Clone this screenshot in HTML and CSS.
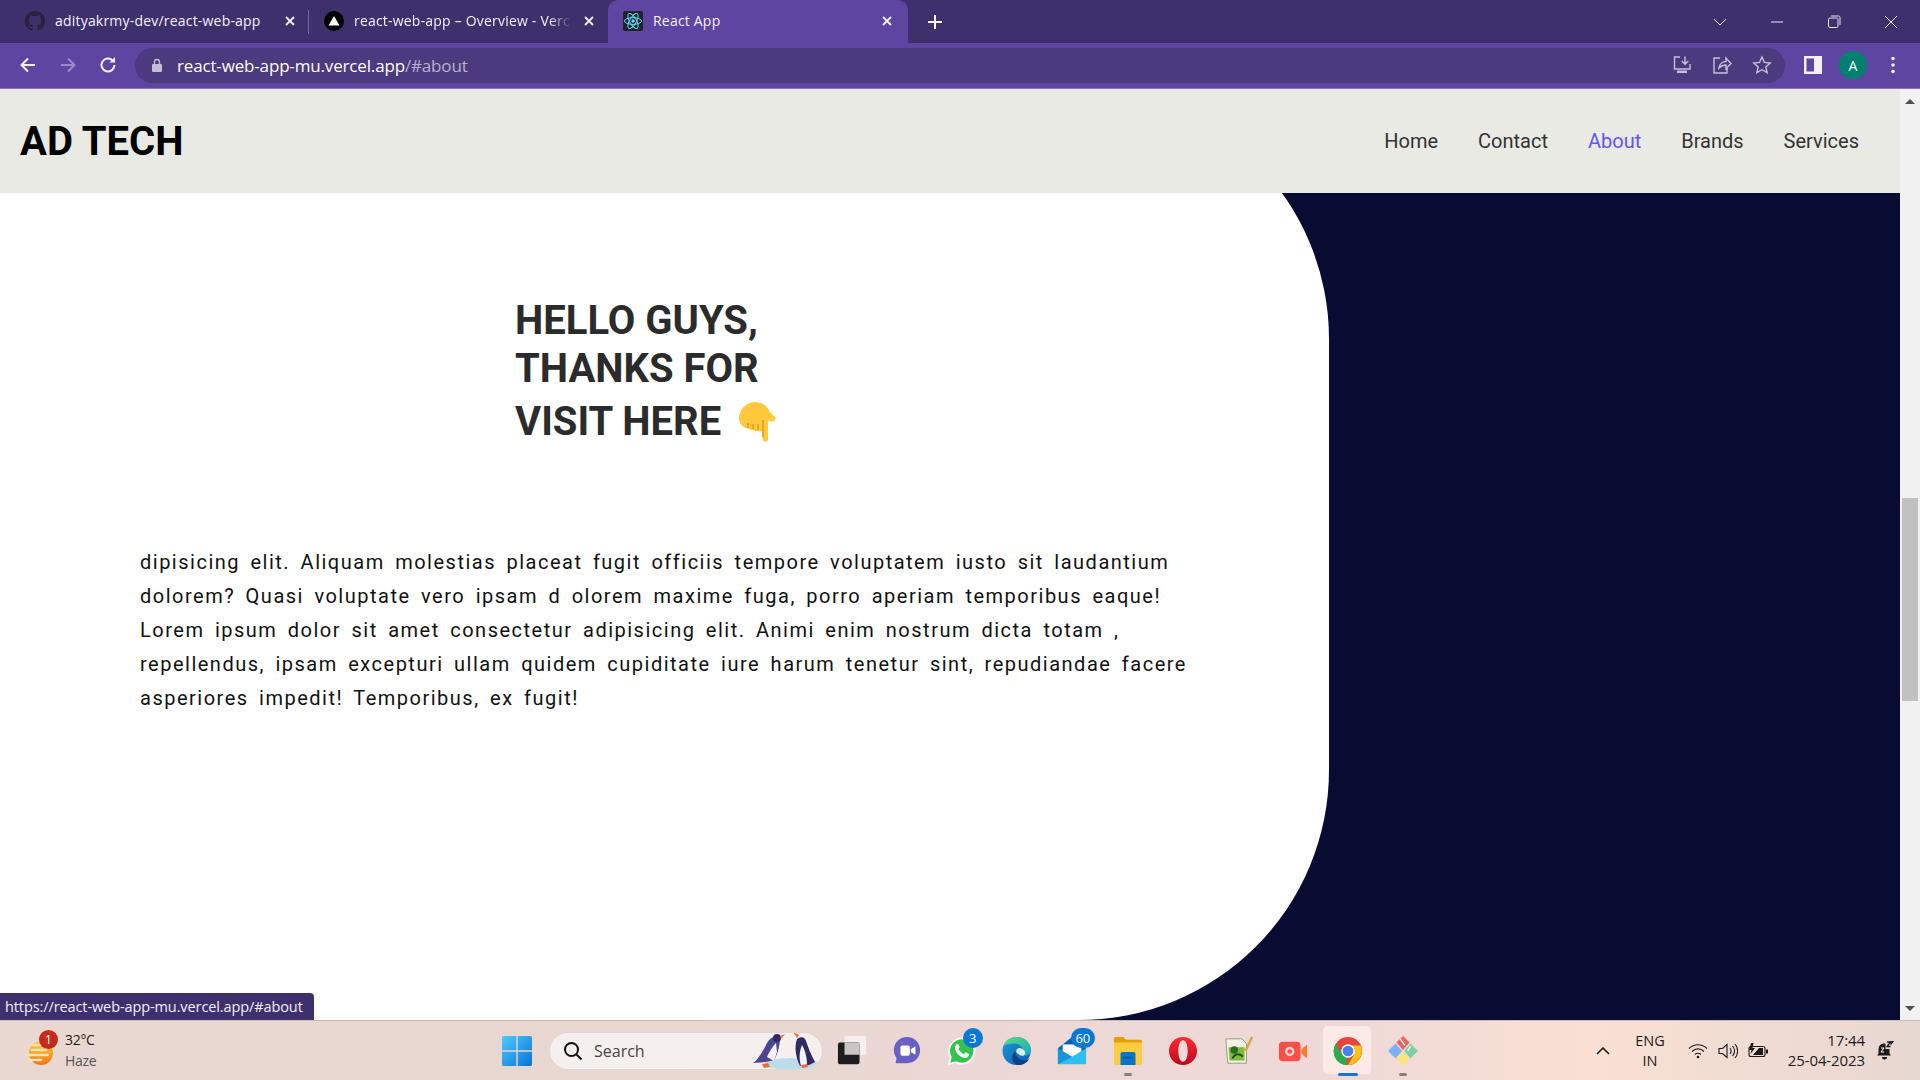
FILE: index.html
```html
<!DOCTYPE html>
<html lang="en">
<head>
<meta charset="utf-8">
<title>React App</title>
<link rel="stylesheet" href="styles.css">
</head>
<body>
<header class="browser">
  <div class="tabstrip">
    <div class="tab tab-one">
      <svg class="favicon" viewBox="0 0 16 16"><path fill="#24243a" d="M8 0C3.58 0 0 3.58 0 8c0 3.54 2.29 6.53 5.47 7.59.4.07.55-.17.55-.38 0-.19-.01-.82-.01-1.49-2.01.37-2.53-.49-2.69-.94-.09-.23-.48-.94-.82-1.13-.28-.15-.68-.52-.01-.53.63-.01 1.08.58 1.23.82.72 1.21 1.87.87 2.33.66.07-.52.28-.87.51-1.07-1.78-.2-3.64-.89-3.64-3.95 0-.87.31-1.59.82-2.15-.08-.2-.36-1.02.08-2.12 0 0 .67-.21 2.2.82.64-.18 1.32-.27 2-.27.68 0 1.36.09 2 .27 1.53-1.04 2.2-.82 2.2-.82.44 1.1.16 1.92.08 2.12.51.56.82 1.27.82 2.15 0 3.07-1.87 3.75-3.65 3.95.29.25.54.73.54 1.48 0 1.07-.01 1.93-.01 2.2 0 .21.15.46.55.38A8.013 8.013 0 0016 8c0-4.42-3.58-8-8-8z"/></svg>
      <span class="tab-title">adityakrmy-dev/react-web-app</span>
      <svg class="tab-close" viewBox="0 0 10 10"><path d="M1 1l8 8M9 1l-8 8"/></svg>
    </div>
    <div class="tab tab-two">
      <svg class="favicon" viewBox="0 0 20 20"><circle cx="10" cy="10" r="10" fill="#000"/><path d="M10 5l5.5 9.5h-11z" fill="#fff"/></svg>
      <span class="tab-title tab-fade">react-web-app – Overview - Verc</span>
      <svg class="tab-close" viewBox="0 0 10 10"><path d="M1 1l8 8M9 1l-8 8"/></svg>
    </div>
    <div class="tab tab-active">
      <svg class="favicon" viewBox="0 0 20 20"><rect width="20" height="20" rx="2" fill="#20232a"/><g fill="none" stroke="#61dafb" stroke-width="1"><ellipse cx="10" cy="10" rx="8.5" ry="3.4"/><ellipse cx="10" cy="10" rx="8.5" ry="3.4" transform="rotate(60 10 10)"/><ellipse cx="10" cy="10" rx="8.5" ry="3.4" transform="rotate(120 10 10)"/></g><circle cx="10" cy="10" r="1.7" fill="#61dafb"/></svg>
      <span class="tab-title">React App</span>
      <svg class="tab-close" viewBox="0 0 10 10"><path d="M1 1l8 8M9 1l-8 8"/></svg>
    </div>
    <svg class="new-tab" viewBox="0 0 14 14"><path d="M7 0v14M0 7h14"/></svg>
    <div class="window-controls">
      <svg class="win-icon" viewBox="0 0 14 14"><path d="M1 4l6 6 6-6"/></svg>
      <svg class="win-icon" viewBox="0 0 14 14"><path d="M1 7h12"/></svg>
      <svg class="win-icon" viewBox="0 0 14 14"><rect x="1.5" y="3" width="9.5" height="9.5" rx="1.5"/><path d="M4 1h7.5a1.5 1.5 0 0 1 1.5 1.5V10"/></svg>
      <svg class="win-icon" viewBox="0 0 14 14"><path d="M1 1l12 12M13 1L1 13"/></svg>
    </div>
  </div>
  <div class="toolbar">
    <svg class="nav-btn nav-back" viewBox="0 0 18 18"><path d="M16 9H3M9 2.5L2.5 9 9 15.500"/></svg>
    <svg class="nav-btn nav-forward" viewBox="0 0 18 18"><path d="M2 9h13M9 2.500L15.500 9 9 15.500"/></svg>
    <svg class="nav-btn nav-reload" viewBox="0 0 18 18"><path d="M15.500 9a6.500 6.500 0 1 1-1.900-4.600"/><path class="solid" d="M16 1v5.500h-5.500z"/></svg>
    <div class="omnibox">
      <svg class="lock" viewBox="0 0 12 14"><path d="M2 6h8a1 1 0 0 1 1 1v6a1 1 0 0 1-1 1H2a1 1 0 0 1-1-1V7a1 1 0 0 1 1-1z" fill="#c3bdd6"/><path d="M3.500 6V4a2.500 2.500 0 0 1 5 0v2" fill="none" stroke="#c3bdd6" stroke-width="1.300"/></svg>
      <span class="url">react-web-app-mu.vercel.app<span class="url-dim">/#about</span></span>
      <div class="omni-actions">
        <svg class="omni-icon" viewBox="0 0 20 20"><path d="M8 2H2.500v12H18V9M13 1.500V9M9.800 6l3.200 3.200L16.200 6"/><path class="solid" d="M5 15.500h10v2.500H5z"/></svg>
        <svg class="omni-icon" viewBox="0 0 20 20"><path d="M8 3H2v15h13v-5M7 13c.5-4 3.500-6.500 7-6.500V3l5 5.500-5 5V10c-3 0-5 1-7 3z"/></svg>
        <svg class="omni-icon" viewBox="0 0 20 20"><path d="M10 2l2.400 5.400 5.800.6-4.400 3.900 1.300 5.800L10 14.700l-5.100 3 1.300-5.800L1.800 8l5.800-.6z"/></svg>
      </div>
    </div>
    <div class="profile-actions">
      <svg class="panel-icon" viewBox="0 0 18 18"><path fill="#f2f0f7" d="M0 0h18v18H0z"/><path fill="#5d45a1" d="M2.500 2.500h7.500v13H2.500z"/></svg>
      <span class="avatar">A</span>
      <svg class="dots" viewBox="0 0 4 18"><circle cx="2" cy="2.500" r="1.800"/><circle cx="2" cy="9" r="1.800"/><circle cx="2" cy="15.500" r="1.800"/></svg>
    </div>
  </div>
</header>

<main class="viewport">
  <nav class="site-nav">
    <h1 class="brand">AD TECH</h1>
    <ul class="nav-links">
      <li>Home</li>
      <li>Contact</li>
      <li class="current">About</li>
      <li>Brands</li>
      <li>Services</li>
    </ul>
  </nav>
  <section class="about-page">
    <div class="about-card">
      <h2 class="about-title">HELLO GUYS,<br>THANKS FOR<span class="title-last">VISIT HERE <svg class="hand" viewBox="0 0 38 41"><path fill="#ffc83d" d="M1 17C1 8 9 1 17 1c7 0 12 4 15 10l5 5c1.500 2-.5 5-3 4.500l-4-1V38c0 3.500-5 3.500-5.500 0L24 30c-2 1-3.500.5-4.500-.5-1.500 1-3.500 1-4.500-.5-2 .5-3.500-.5-4.500-1.500C5 27 1 23 1 17z"/><path fill="none" stroke="#e39a12" stroke-width="1.500" d="M25 19v17M10 22v5M15 23v5M20 23v6"/></svg></span></h2>
      <p class="about-text">dipisicing elit. Aliquam molestias placeat fugit officiis tempore voluptatem iusto sit laudantium dolorem? Quasi voluptate vero ipsam d olorem maxime fuga, porro aperiam temporibus eaque! Lorem ipsum dolor sit amet consectetur adipisicing elit. Animi enim nostrum dicta totam , repellendus, ipsam excepturi ullam quidem cupiditate iure harum tenetur sint, repudiandae facere asperiores impedit! Temporibus, ex fugit!</p>
    </div>
  </section>
  <aside class="scrollbar">
    <span class="arrow arrow-up"></span>
    <span class="thumb"></span>
    <span class="arrow arrow-down"></span>
  </aside>
  <div class="status-bubble">https://react-web-app-mu.vercel.app/#about</div>
</main>

<footer class="taskbar">
  <div class="weather">
    <svg class="weather-icon" viewBox="0 0 30 30"><defs><linearGradient id="sun" x1="0" y1="0" x2="0" y2="1"><stop offset="0" stop-color="#ffd23f"/><stop offset="1" stop-color="#f0740f"/></linearGradient></defs><circle cx="16" cy="15" r="12" fill="url(#sun)"/><path d="M8 7h12M7 12h14M1 17h22M4 22h12" stroke="#f4e3b5" stroke-width="2.500" stroke-linecap="round"/></svg>
    <span class="weather-badge">1</span>
    <div class="weather-text"><span>32°C</span><span class="haze">Haze</span></div>
  </div>
  <div class="task-center">
    <svg class="start" viewBox="0 0 30 30"><defs><linearGradient id="win" x1="0" y1="0" x2="1" y2="1"><stop offset="0" stop-color="#4fc9fb"/><stop offset="1" stop-color="#0a74d4"/></linearGradient></defs><path fill="url(#win)" d="M0 1.500A1.500 1.500 0 0 1 1.500 0H14.300v14.300H0zM15.700 0H28.500A1.500 1.500 0 0 1 30 1.500V14.300H15.700zM0 15.700H14.300V30H1.500A1.500 1.500 0 0 1 0 28.500zM15.700 15.700H30V28.500A1.500 1.500 0 0 1 28.500 30H15.700z"/></svg>
    <div class="search">
      <svg class="search-icon" viewBox="0 0 20 20"><circle cx="8.500" cy="8.500" r="6.500"/><path d="M13.500 13.500L18.500 18.500"/></svg>
      <span class="search-label">Search</span>
      <svg class="penguins" viewBox="0 0 72 38"><ellipse cx="45" cy="33" rx="27" ry="6" fill="#bcdcec"/><path d="M6 32c5-3 10-12 14-20 3-5 8-8 12-7l1 5c-1 6-2 13-6 19l-8 2z" fill="#4c4590"/><path d="M20 26c2-5 6-11 9-14l1 9-3 9z" fill="#f4f1f5"/><circle cx="30" cy="7" r="4" fill="#2e2a63"/><path d="M33 5l5-2-4 5z" fill="#ef6c2c"/><path d="M50 8c4-3 8-2 9 2 2 6 5 14 9 21l-6 3-9 1c-4-8-6-19-3-27z" fill="#2e2a63"/><path d="M55 14c3 5 5 12 5 20l-6 1c-2-7-2-14 1-21z" fill="#f4f1f5"/><path d="M50 7l-4-6 6 3z" fill="#ef6c2c"/><path d="M15 33l6-1 2 4-6 1zM54 34l6-1 1 3-6 1z" fill="#ef6c2c"/></svg>
    </div>
    <div class="task-apps">
      <div class="app">
        <svg class="app-icon" viewBox="0 0 32 32"><rect x="8" y="0" width="23" height="20" rx="2" fill="#f6f3f2" fill-opacity=".9"/><rect x="1" y="7" width="23" height="23" rx="2" fill="#1d1d1d"/><rect x="8" y="7" width="16" height="13" fill="#c9c6c4"/></svg>
      </div>
      <div class="app">
        <svg class="app-icon" viewBox="0 0 32 32"><path fill="#6a5fc4" d="M16 1c8 0 14 6 14 14s-6 14-14 14H5c-1 0-1.500-1-1-2l1-3c-2-3-3-6-3-9C2 7 8 1 16 1z"/><rect x="9" y="10" width="10" height="11" rx="2" fill="#fff"/><path d="M20 14l5-3v9l-5-3z" fill="#fff"/></svg>
      </div>
      <div class="app">
        <svg class="app-icon" viewBox="0 0 32 32"><path fill="#fff" d="M1 31l2-8a14.500 14.500 0 1 1 6 6z"/><path fill="#35c34f" d="M3.500 28.500l1.500-6A12.500 12.500 0 1 1 9.800 27z"/><path fill="#fff" d="M11 8.500c-1 0-2.500 1.500-2.500 4 0 3 2 6 4.500 8 2.500 2 5 3 7 2.800 2-.3 3.500-2 3.500-3.300l-.2-1-3.500-1.700-1.700 2c-2.500-.8-5-3-6-5.600l1.500-1.700L12.200 9z"/></svg>
        <span class="app-badge">3</span>
      </div>
      <div class="app">
        <svg class="app-icon" viewBox="0 0 32 32"><defs><linearGradient id="edge1" x1="0" y1="0" x2="1" y2="1"><stop offset="0" stop-color="#5be07a"/><stop offset="1" stop-color="#12a5c9"/></linearGradient><linearGradient id="edge2" x1="0" y1="0" x2="1" y2="1"><stop offset="0" stop-color="#1d9ee0"/><stop offset="1" stop-color="#0b57a4"/></linearGradient></defs><circle cx="15.500" cy="16" r="15" fill="url(#edge2)"/><path fill="url(#edge1)" d="M2 10C5 3 11 1 16 1c8 0 15 6 15 14 0 4-3 6-6 6-4 0-6-1-6-2 2 0 3-2 3-4 0-4-4-7-9-7-4 0-8 1-11 2z"/><path fill="#0b3f86" d="M14 16c0 5 4 10 10 10 2 0 4-.5 5-1.500-2 4-7 6.500-11 6.500-4 0-7-3-7-8 0-3 1-5 3-7z"/><ellipse cx="20" cy="17" rx="5" ry="3.500" fill="#fff" fill-opacity=".85" transform="rotate(30 20 17)"/></svg>
      </div>
      <div class="app">
        <svg class="app-icon" viewBox="0 0 32 32"><path fill="#0a5fb4" d="M1 13L16 1l15 12v4H1z"/><path fill="#fff" d="M6 9h20v12H6z"/><path fill="#2ec0f2" d="M1 13l15 9 15-9v17H1z"/><path fill="#1695dc" d="M1 13l15 9L1 30z"/></svg>
        <span class="app-badge app-badge-wide">60</span>
      </div>
      <div class="app has-dot">
        <svg class="app-icon" viewBox="0 0 32 32"><path fill="#e0a106" d="M1 3a2 2 0 0 1 2-2h8l3 3h15a2 2 0 0 1 2 2v6H1z"/><path fill="#fccc40" d="M1 7h30v22a2 2 0 0 1-2 2H3a2 2 0 0 1-2-2z"/><path fill="#0a74c9" d="M8 19a2 2 0 0 1 2-2h12a2 2 0 0 1 2 2v12H8z"/><path fill="#085a9e" d="M11 22h10v2H11z"/></svg>
        <span class="dot"></span>
      </div>
      <div class="app">
        <svg class="app-icon" viewBox="0 0 32 32"><defs><linearGradient id="op" x1="0" y1="0" x2="0" y2="1"><stop offset="0" stop-color="#ff2a33"/><stop offset="1" stop-color="#b90a1c"/></linearGradient></defs><path fill="url(#op)" fill-rule="evenodd" d="M16 1c8 0 15 6.500 15 15s-7 15-15 15S1 24.500 1 16 8 1 16 1zm0 3.500c-3 0-5 5-5 11.500s2 11.500 5 11.500 5-5 5-11.500S19 4.500 16 4.500z"/></svg>
      </div>
      <div class="app">
        <svg class="app-icon" viewBox="0 0 32 32"><path fill="#f1f1e5" stroke="#8c9a76" d="M3 3h17l5 5v21H5z"/><path fill="#7dbb3e" d="M6 12h17v14H7z"/><circle cx="12" cy="15" r="4" fill="#2f6a25"/><path d="M10 24c2-5 8-6 11-2" stroke="#1f4c1a" stroke-width="2" fill="none"/><path d="M24 16L31 1" stroke="#d9a43a" stroke-width="2.500"/></svg>
      </div>
      <div class="app">
        <svg class="app-icon" viewBox="0 0 32 32"><rect x="1" y="6" width="23" height="21" rx="4" fill="#f9504c"/><circle cx="12.500" cy="16.500" r="5" fill="#fbd3cc"/><circle cx="12.500" cy="16.500" r="2.500" fill="#f9504c"/><path d="M25 14l6-5v15l-6-5z" fill="#fb7a2e"/></svg>
      </div>
      <div class="app app-active">
        <svg class="app-icon" viewBox="0 0 32 32"><circle cx="16" cy="16" r="15" fill="#e8453c"/><path fill="#2da94f" d="M16 31A15 15 0 0 1 3 8.500l7.500 13L16 31z"/><path fill="#2da94f" d="M3 8.500L10 20l6 3-4 8A15 15 0 0 1 3 8.500z"/><path fill="#fbc116" d="M16 10h13.500A15 15 0 0 1 16 31l6.500-11z"/><circle cx="16" cy="16" r="7.200" fill="#fff"/><circle cx="16" cy="16" r="5.700" fill="#3f82f0"/></svg>
        <span class="dot dot-active"></span>
      </div>
      <div class="app has-dot">
        <svg class="app-icon" viewBox="0 0 32 32"><path fill="#f0605a" d="M16 0l7 7-7 8-7-8z"/><path fill="#7ed0a4" d="M24 8l8 8-8 8-7-8z"/><path fill="#fbe27a" d="M16 17l7 7-7 8-7-8z"/><path fill="#7cb2f5" d="M8 8l7 8-7 8-8-8z"/><path stroke="#fff" stroke-width="1.500" d="M13 3l5 7M24 11l-3 5"/></svg>
        <span class="dot"></span>
      </div>
    </div>
  </div>
  <div class="tray">
    <svg class="tray-caret" viewBox="0 0 14 8"><path d="M1 7l6-6 6 6"/></svg>
    <div class="lang"><span>ENG</span><span>IN</span></div>
    <div class="tray-icons">
      <svg class="tray-icon" viewBox="0 0 20 16"><path d="M1 5.500c5-5 13-5 18 0M4 8.500c3.500-3.500 8.500-3.500 12 0M7 11.500c1.700-1.700 4.300-1.700 6 0"/><circle class="solid" cx="10" cy="14" r="1.300"/></svg>
      <svg class="tray-icon" viewBox="0 0 20 16"><path d="M1 5.500h3.500L9 1.500v13l-4.500-4H1zM12 5c1.500 2 1.500 4 0 6M14.500 3c2.500 3 2.500 7 0 10M17 1c3.500 4 3.500 10 0 14"/></svg>
      <svg class="tray-icon" viewBox="0 0 20 16"><rect x="1" y="3.500" width="16" height="10" rx="2"/><path class="solid" d="M18 6.500h2v4h-2zM5 12l6-7h4v7z"/><path class="solid" d="M3 0L1 7h2.500L2.500 11 7 5H4.500L5.500 0z"/></svg>
    </div>
    <div class="clock"><span>17:44</span><span>25-04-2023</span></div>
    <svg class="bell" viewBox="0 0 18 20"><path fill="#1b1b1b" d="M1 14.500l1.500-2V8a5.500 5.500 0 0 1 7-5.300V8h4V12.500l1.500 2zM6 16h5a2.500 2.500 0 0 1-5 0z"/><path fill="none" stroke="#fff" stroke-width="1" d="M5 7h3L5 11h3"/><path fill="none" stroke="#1b1b1b" stroke-width="1.300" d="M11 1h3.500L11 5.500h3.500M14 .5h3L14.500 3.500"/></svg>
  </div>
</footer>
</body>
</html>
```
FILE: styles.css
```css
* { box-sizing: border-box; margin: 0; padding: 0; }
html, body { width: 100%; height: 100%; overflow: hidden; }
body { display: flex; flex-direction: column; font-family: Roboto, "Liberation Sans", sans-serif; background: #fff; }
ul { list-style: none; }

/* browser chrome */
.browser { flex: none; height: 89px; font-family: "Open Sans", "Noto Sans", sans-serif; color: #fff; }
.tabstrip { height: 43px; background: #3e2f6d; display: flex; align-items: center; position: relative; }
.tab { height: 43px; display: flex; align-items: center; flex: none; position: relative; padding-bottom: 2px; }
.tab-one { width: 309px; padding-left: 25px; }
.tab-one::after { content: ""; position: absolute; right: 0; top: 10px; height: 24px; width: 1px; background: #75699a; }
.tab-two { width: 299px; padding-left: 15px; }
.tab-active { width: 300px; padding-left: 15px; background: #5d45a1; border-radius: 10px 10px 0 0; }
.favicon { width: 20px; height: 20px; flex: none; margin-right: 10px; }
.tab-title { font-size: 14px; letter-spacing: .2px; white-space: nowrap; color: #f3f1f8; }
.tab-fade { width: 218px; -webkit-mask-image: linear-gradient(to right, #000 195px, transparent 218px); mask-image: linear-gradient(to right, #000 195px, transparent 218px); }
.tab-close { width: 10px; height: 10px; position: absolute; top: 16px; right: 14px; fill: none; stroke: #f3f1f8; stroke-width: 1.800; }
.tab-active .tab-close { right: 16px; }
.new-tab { width: 14px; height: 14px; margin-left: 20px; fill: none; stroke: #fff; stroke-width: 2; flex: none; }
.window-controls { margin-left: auto; display: flex; gap: 43px; padding-right: 22px; align-items: center; }
.win-icon { width: 14px; height: 14px; fill: none; stroke: #e9e6f1; stroke-width: 1; }
.toolbar { height: 46px; background: #5d45a1; border-bottom: 1px solid #8473bd; display: flex; align-items: center; padding-left: 19px; padding-bottom: 1px; }
.nav-btn { width: 18px; height: 18px; fill: none; stroke: #f3f1f8; stroke-width: 2; flex: none; margin-right: 22px; }
.nav-forward { stroke: #9b8cc7; }
.nav-reload { margin-right: 18px; }
.nav-reload .solid { fill: #f3f1f8; stroke: none; }
.omnibox { width: 1650px; height: 35px; border-radius: 18px; background: #4b3a7e; display: flex; align-items: center; padding-left: 16px; flex: none; }
.lock { width: 12px; height: 14px; margin-right: 14px; flex: none; }
.url { font-size: 17px; letter-spacing: -.16px; color: #fff; white-space: nowrap; }
.url-dim { color: #b9b1d2; }
.omni-actions { margin-left: auto; display: flex; gap: 20px; padding-right: 13px; }
.omni-icon { width: 20px; height: 20px; fill: none; stroke: #c6c0d8; stroke-width: 1.400; }
.omni-icon .solid { fill: #c6c0d8; stroke: none; }
.profile-actions { display: flex; align-items: center; margin-left: 19px; }
.panel-icon { width: 18px; height: 18px; }
.avatar { width: 28px; height: 28px; margin-left: 17px; border-radius: 50%; background: #00806e; color: #fff; font-size: 14px; display: flex; align-items: center; justify-content: center; }
.dots { width: 4px; height: 18px; margin-left: 24px; fill: #f3f1f8; }

/* page */
.viewport { flex: 1; min-height: 0; display: flex; position: relative; }
.about-page { flex: 1; background: #080c33; min-width: 0; }
.about-card { width: 1329px; height: 100%; background: #fff; border-radius: 0 250px 250px 0; padding: 208px 0 0 140px; }
.site-nav { position: absolute; left: 0; top: 0; right: 20px; height: 104px; background: #e9eae4; display: flex; align-items: center; justify-content: space-between; padding: 0 41px 0 20px; }
.brand { font-size: 40px; font-weight: 700; color: #000; }
.nav-links { display: flex; gap: 40px; font-size: 20px; color: #333; }
.current { color: #5f55f5; }
.about-title { font-size: 40px; font-weight: 700; color: #2b2b2b; margin-left: 375px; line-height: 48px; }
.title-last { display: block; margin-top: 5px; }
.hand { width: 38px; height: 41px; vertical-align: -7px; margin-left: 7px; }
.about-text { width: 1052px; margin-top: 99px; font-size: 20px; line-height: 34px; letter-spacing: 1.500px; word-spacing: 4px; color: #111; }

.scrollbar { flex: none; width: 20px; background: #f1f1f1; position: relative; }
.thumb { position: absolute; left: 2px; top: 409px; width: 16px; height: 203px; background: #c1c1c1; }
.arrow { position: absolute; left: 5px; width: 0; height: 0; border-left: 5px solid transparent; border-right: 5px solid transparent; }
.arrow-up { top: 10px; border-bottom: 5px solid #505050; }
.arrow-down { bottom: 9px; border-top: 5px solid #505050; }
.status-bubble { position: absolute; left: 0; bottom: 0; width: 314px; height: 27px; background: #3e2f6d; color: #f1eff7; border-radius: 0 4px 0 0; font: 14.500px/27px "Open Sans", sans-serif; letter-spacing: -.1px; padding-left: 5px; white-space: nowrap; }

/* taskbar */
.taskbar { flex: none; height: 60px; border-top: 1px solid #c8bdb6; background: linear-gradient(90deg, #e8d8d1 0%, #e9d7d2 40%, #efd9d8 70%, #f9e0d2 83%, #e7d7d2 100%); display: flex; align-items: center; font-family: "Open Sans", "Noto Sans", sans-serif; color: #1c1c1c; }
.weather { width: 502px; flex: none; padding-left: 25px; display: flex; align-items: center; position: relative; }
.weather-icon { width: 30px; height: 30px; flex: none; margin-top: 4px; }
.weather-badge { position: absolute; left: 39px; top: -1px; width: 19px; height: 19px; border-radius: 50%; background: #c42b1c; color: #fff; font-size: 12px; display: flex; align-items: center; justify-content: center; }
.weather-text { display: flex; flex-direction: column; margin: -2px 0 0 10px; font-size: 14px; letter-spacing: -.3px; line-height: 21px; }
.haze { color: #555; }
.task-center { display: flex; align-items: center; flex: none; }
.start { width: 30px; height: 30px; flex: none; }
.search { width: 274px; height: 38px; margin-left: 17px; border-radius: 19px; background: #f5f0ed; border: 1px solid #dfd6d2; display: flex; align-items: center; padding-left: 13px; position: relative; overflow: hidden; }
.search-icon { width: 20px; height: 20px; fill: none; stroke: #111; stroke-width: 2; flex: none; }
.search-label { margin-left: 11px; font-size: 16px; letter-spacing: 0; color: #444; }
.penguins { position: absolute; right: 3px; bottom: 0; width: 72px; height: 38px; }
.task-apps { display: flex; margin-left: 1.500px; }
.app { width: 55.100px; height: 59px; display: flex; align-items: center; justify-content: center; position: relative; flex: none; }
.app-icon { width: 30px; height: 30px; }
.app-badge { position: absolute; left: 28px; top: 7px; min-width: 20px; height: 20px; border-radius: 10px; background: #0a78d4; color: #fff; font-size: 13px; display: flex; align-items: center; justify-content: center; }
.app-badge-wide { left: 26px; width: 24px; }
.dot { position: absolute; left: 50%; bottom: 4px; width: 8px; height: 3px; margin-left: -4px; border-radius: 2px; background: #85807e; }
.app-active::before { content: ""; position: absolute; left: 3px; right: 4px; top: 5px; bottom: 6px; background: #fbeae6; border-radius: 5px; }
.app-active .app-icon { position: relative; }
.dot-active { width: 20px; margin-left: -10px; background: #0a78d4; }
.tray { margin-left: auto; display: flex; align-items: center; padding-right: 26px; }
.tray-caret { width: 14px; height: 8px; fill: none; stroke: #111; stroke-width: 1.500; margin-right: 23px; }
.lang { display: flex; flex-direction: column; align-items: center; font-size: 14.500px; line-height: 20px; margin-right: 21px; width: 34px; }
.tray-icons { display: flex; gap: 10px; }
.tray-icon { width: 20px; height: 16px; fill: none; stroke: #1b1b1b; stroke-width: 1.100; }
.tray-icon .solid { fill: #1b1b1b; stroke: none; }
.clock { display: flex; flex-direction: column; align-items: flex-end; font-size: 15px; line-height: 20px; margin: -2px 0 0 13px; width: 84px; letter-spacing: -.1px; }
.bell { width: 18px; height: 20px; margin-left: 11px; flex: none; }
```
